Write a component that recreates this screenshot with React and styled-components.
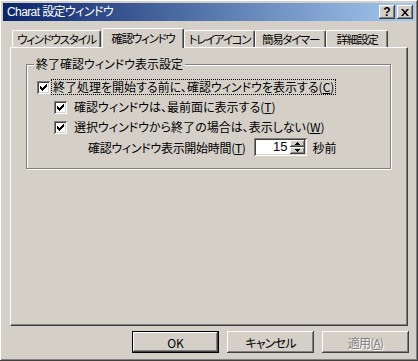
import styled, { createGlobalStyle } from 'styled-components';

const Global = createGlobalStyle`
    html, body {
        margin: 0;
        padding: 0;
        background: #d4d0c8;
    }
    body {
        font-family: "Noto Sans CJK JP", "Liberation Sans", sans-serif;
        font-size: 12px;
        font-feature-settings: "palt";
        color: #000;
    }
`;

const raised = `
    box-shadow: inset -1px -1px #404040, inset 1px 1px #ffffff,
        inset -2px -2px #808080, inset 2px 2px #d4d0c8;
`;

const Window = styled.div`
    width: 418px;
    height: 361px;
    box-sizing: border-box;
    padding: 3px;
    background: #d4d0c8;
    ${raised}
    display: flex;
    flex-direction: column;
`;

const TitleBar = styled.div`
    height: 18px;
    flex: none;
    display: flex;
    align-items: center;
    padding: 0 2px 0 2px;
    background: linear-gradient(to right, #0a246a, #a6caf0);
`;

const Title = styled.span`
    flex: 1;
    color: #fff;
    font-family: "Liberation Sans", "Noto Sans CJK JP", sans-serif;
    font-size: 12px;
    letter-spacing: -0.6px;
    line-height: 18px;
    padding-left: 2px;
`;

const CaptionButton = styled.button`
    width: 16px;
    height: 14px;
    padding: 0;
    margin-left: ${(p) => p.gap || 0}px;
    border: none;
    background: #d4d0c8;
    ${raised}
    display: flex;
    align-items: center;
    justify-content: center;
    font-family: "Liberation Sans", sans-serif;
    font-weight: bold;
    font-size: 12px;
    line-height: 12px;
    color: #000;
`;

const Body = styled.div`
    flex: 1;
    display: flex;
    flex-direction: column;
    padding: 7px 7px 0 7px;
`;

const TabStrip = styled.div`
    display: flex;
    align-items: flex-end;
    height: 19px;
    padding-left: 2px;
`;

const Tab = styled.div`
    box-sizing: border-box;
    width: ${(p) => p.width}px;
    height: ${(p) => (p.active ? 20 : 17)}px;
    margin-bottom: ${(p) => (p.active ? -1 : 0)}px;
    margin-left: ${(p) => (p.active ? 1 : 0)}px;
    position: relative;
    z-index: ${(p) => (p.active ? 2 : 1)};
    background: #d4d0c8;
    border-left: 1px solid #fff;
    border-top: 1px solid #fff;
    border-right: 1px solid #404040;
    border-radius: 2px 2px 0 0;
    box-shadow: inset -1px 0 #808080;
    display: flex;
    align-items: center;
    justify-content: center;
    padding-bottom: ${(p) => (p.active ? 2 : 0)}px;
    font-size: 11.5px;
    letter-spacing: -1.3px;
    white-space: nowrap;
    overflow: hidden;
`;

const Panel = styled.div`
    box-sizing: border-box;
    width: 398px;
    height: 279px;
    background: #d4d0c8;
    border-top: 1px solid #fff;
    border-left: 1px solid #fff;
    border-right: 1px solid #404040;
    border-bottom: 1px solid #404040;
    box-shadow: inset -1px -1px #808080;
    padding: 16px 0 0 15px;
`;

const Group = styled.div`
    position: relative;
    box-sizing: border-box;
    width: 365px;
    height: 105px;
    border: 1px solid #808080;
    box-shadow: inset 1px 1px #fff, 1px 1px #fff;
    padding: 12px 0 0 10px;
    display: flex;
    flex-direction: column;
`;

const Legend = styled.span`
    position: absolute;
    top: -9px;
    left: 7px;
    padding: 0 2px;
    background: #d4d0c8;
    line-height: 16px;
`;

const Row = styled.div`
    display: flex;
    align-items: center;
    height: 20px;
    padding-left: ${(p) => p.indent || 0}px;
    white-space: nowrap;
`;

const Box = styled.span`
    box-sizing: border-box;
    width: 13px;
    height: 13px;
    flex: none;
    background: #fff;
    box-shadow: inset 1px 1px #808080, inset -1px -1px #fff,
        inset 2px 2px #404040, inset -2px -2px #d4d0c8;
    display: flex;
    align-items: center;
    justify-content: center;
`;

const Label = styled.span`
    margin-left: ${(p) => (p.focus ? 1 : 5)}px;
    padding: 0 1px;
    line-height: 14px;
    border: 1px dotted ${(p) => (p.focus ? '#000' : 'transparent')};
`;

const SpinLabel = styled.span`
    letter-spacing: -0.3px;
`;

const SpinField = styled.div`
    box-sizing: border-box;
    width: 53px;
    height: 18px;
    margin: 0 6px 0 8px;
    background: #fff;
    box-shadow: inset 1px 1px #808080, inset -1px -1px #fff,
        inset 2px 2px #404040, inset -2px -2px #d4d0c8;
    padding: 2px;
    display: flex;
`;

const SpinValue = styled.span`
    flex: 1;
    text-align: right;
    padding-right: 2px;
    font-family: "Liberation Sans", sans-serif;
    font-size: 13px;
    line-height: 14px;
`;

const SpinButtons = styled.div`
    width: 15px;
    display: flex;
    flex-direction: column;
`;

const SpinButton = styled.span`
    flex: 1;
    background: #d4d0c8;
    ${raised}
    display: flex;
    align-items: center;
    justify-content: center;
`;

const ButtonRow = styled.div`
    display: flex;
    justify-content: flex-end;
    gap: 8px;
    margin: 5px -1px 0 0;
`;

const PushButton = styled.button`
    box-sizing: border-box;
    width: 87px;
    height: 22px;
    padding: 0;
    background: #d4d0c8;
    border: ${(p) => (p.primary ? '1px solid #000' : 'none')};
    ${raised}
    font-family: "Noto Sans CJK JP", "Liberation Sans", sans-serif;
    font-feature-settings: "palt";
    font-size: 12px;
    letter-spacing: ${(p) => (p.primary ? 0 : -0.8)}px;
    color: ${(p) => (p.disabled ? '#808080' : '#000')};
    text-shadow: ${(p) => (p.disabled ? '1px 1px #fff' : 'none')};
`;

function Check() {
    return (
        <Box>
            <svg width="7" height="7" viewBox="0 0 7 7">
                <path d="M0 2h1v1h1v1h1v-1h1v-1h1v-1h1v-1h1v3h-1v1h-1v1h-1v1h-1v1h-1v-1h-1v-1h-1z" fill="#000" />
            </svg>
        </Box>
    );
}

function Arrow({ up }) {
    return (
        <svg width="5" height="3" viewBox="0 0 5 3">
            <path d={up ? 'M2 0h1v1h1v1h1v1h-5v-1h1v-1h1z' : 'M0 0h5v1h-1v1h-1v1h-1v-1h-1v-1h-1z'} fill="#000" />
        </svg>
    );
}

const tabs = [
    { label: 'ウィンドウスタイル', width: 89 },
    { label: '確認ウィンドウ', width: 82, active: true },
    { label: 'トレイアイコン', width: 71 },
    { label: '簡易タイマー', width: 71 },
    { label: '詳細設定', width: 62 },
];

export default function App() {
    return (
        <>
            <Global />
            <Window>
                <TitleBar>
                    <Title>Charat 設定ウィンドウ</Title>
                    <CaptionButton>?</CaptionButton>
                    <CaptionButton gap={2}>
                        <svg width="8" height="7" viewBox="0 0 8 7">
                            <path d="M0 0h2l2 2.5 2-2.5h2l-3 3.5 3 3.5h-2l-2-2.5-2 2.5h-2l3-3.5z" fill="#000" />
                        </svg>
                    </CaptionButton>
                </TitleBar>
                <Body>
                    <TabStrip>
                        {tabs.map((t) => (
                            <Tab key={t.label} width={t.width} active={t.active}>
                                {t.label}
                            </Tab>
                        ))}
                    </TabStrip>
                    <Panel>
                        <Group>
                            <Legend>終了確認ウィンドウ表示設定</Legend>
                            <Row>
                                <Check />
                                <Label focus>
                                    終了処理を開始する前に、確認ウィンドウを表示する(<u>C</u>)
                                </Label>
                            </Row>
                            <Row indent={17}>
                                <Check />
                                <Label>確認ウィンドウは、最前面に表示する(<u>T</u>)</Label>
                            </Row>
                            <Row indent={17}>
                                <Check />
                                <Label>選択ウィンドウから終了の場合は、表示しない(<u>W</u>)</Label>
                            </Row>
                            <Row indent={51}>
                                <SpinLabel>確認ウィンドウ表示開始時間(<u>T</u>)</SpinLabel>
                                <SpinField>
                                    <SpinValue>15</SpinValue>
                                    <SpinButtons>
                                        <SpinButton>
                                            <Arrow up />
                                        </SpinButton>
                                        <SpinButton>
                                            <Arrow />
                                        </SpinButton>
                                    </SpinButtons>
                                </SpinField>
                                <span>秒前</span>
                            </Row>
                        </Group>
                    </Panel>
                    <ButtonRow>
                        <PushButton primary>OK</PushButton>
                        <PushButton>キャンセル</PushButton>
                        <PushButton disabled>
                            適用(<u>A</u>)
                        </PushButton>
                    </ButtonRow>
                </Body>
            </Window>
        </>
    );
}
